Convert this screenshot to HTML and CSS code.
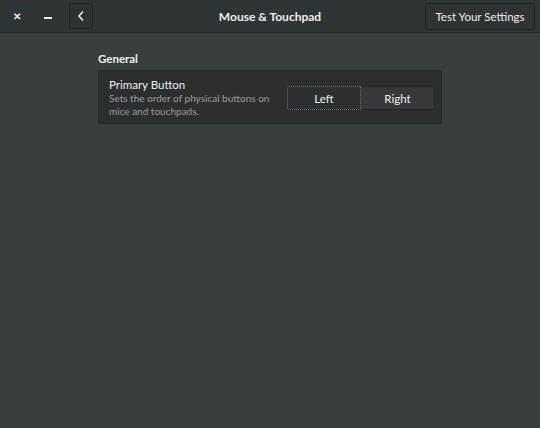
FILE: index.html
```html
<!DOCTYPE html>
<html>
<head>
    <link rel="stylesheet" href="styles.css">
</head>
<body>
    <div class="window">
        <div class="header">
            <div class="wm-buttons">
                <span class="wm close">&#x2715;</span>
                <span class="wm min"></span>
            </div>
            <button class="back">
                <svg width="10" height="12" viewBox="0 0 10 12"><path d="M7 1.5 L3 6 L7 10.5" fill="none" stroke="#eeeeec" stroke-width="1.6"/></svg>
            </button>
            <div class="title">Mouse &amp; Touchpad</div>
            <button class="test">Test Your Settings</button>
        </div>

        <div class="content">
            <div class="section">
                <h2>General</h2>
                <div class="card">
                    <div class="row-text">
                        <div class="row-title">Primary Button</div>
                        <div class="row-sub">Sets the order of physical buttons on mice and touchpads.</div>
                    </div>
                    <div class="toggle">
                        <button class="seg active">Left</button>
                        <button class="seg">Right</button>
                    </div>
                </div>
            </div>
        </div>
    </div>
</body>
</html>
```

FILE: styles.css
```css
body {
    margin: 0;
    font-family: Lato, "Open Sans", sans-serif;
    background: #393f3f;
    color: #eeeeec;
}
.window {
    width: 540px;
    height: 428px;
    background: #393f3f;
}
.header {
    height: 32px;
    display: flex;
    align-items: center;
    background: #2f3434;
    border-bottom: 1px solid #232626;
    padding: 0 5px 0 0;
}
.wm-buttons {
    display: flex;
    align-items: center;
    width: 69px;
}
.wm {
    width: 30px;
    display: flex;
    justify-content: center;
    color: #eeeeec;
}
.close {
    font-size: 10px;
    font-weight: bold;
    margin-left: 2px;
}
.min {
    height: 2px;
    width: 8px;
    background: #eeeeec;
    margin: 4px 0 0 12px;
}
button {
    font-family: inherit;
    color: #eeeeec;
    cursor: pointer;
}
.back {
    width: 24px;
    height: 26px;
    padding: 0;
    background: #2e3232;
    border: 1px solid #1f2222;
    border-radius: 3px;
    display: flex;
    align-items: center;
    justify-content: center;
}
.title {
    flex: 1;
    text-align: center;
    font-size: 12px;
    font-weight: bold;
    padding-left: 22px;
}
.test {
    height: 27px;
    width: 110px;
    padding: 0;
    background: #2f3333;
    border: 1px solid #1f2222;
    border-radius: 3px;
    font-size: 11.5px;
}
.content {
    display: flex;
    justify-content: center;
    padding-top: 19px;
}
.section {
    width: 344px;
}
h2 {
    font-size: 11.5px;
    font-weight: bold;
    margin: 0 0 5px 0;
}
.card {
    display: flex;
    align-items: center;
    justify-content: space-between;
    background: #2c2f2f;
    border: 1px solid #262929;
    border-radius: 2px;
    padding: 7px 6px 5px 10px;
    height: 40px;
}
.row-title {
    font-size: 11.5px;
    line-height: 14px;
}
.row-sub {
    font-size: 10px;
    line-height: 13px;
    color: #9a9e9d;
    width: 175px;
}
.toggle {
    display: flex;
}
.seg {
    width: 74px;
    height: 24px;
    padding: 0;
    font-size: 11.5px;
    background: #353939;
    border: 1px solid #222525;
}
.seg.active {
    background: #2c3030;
    border: 1px dotted #6b706f;
    border-radius: 2px 0 0 2px;
}
.seg:last-child {
    border-left: none;
    border-radius: 0 2px 2px 0;
}
```
